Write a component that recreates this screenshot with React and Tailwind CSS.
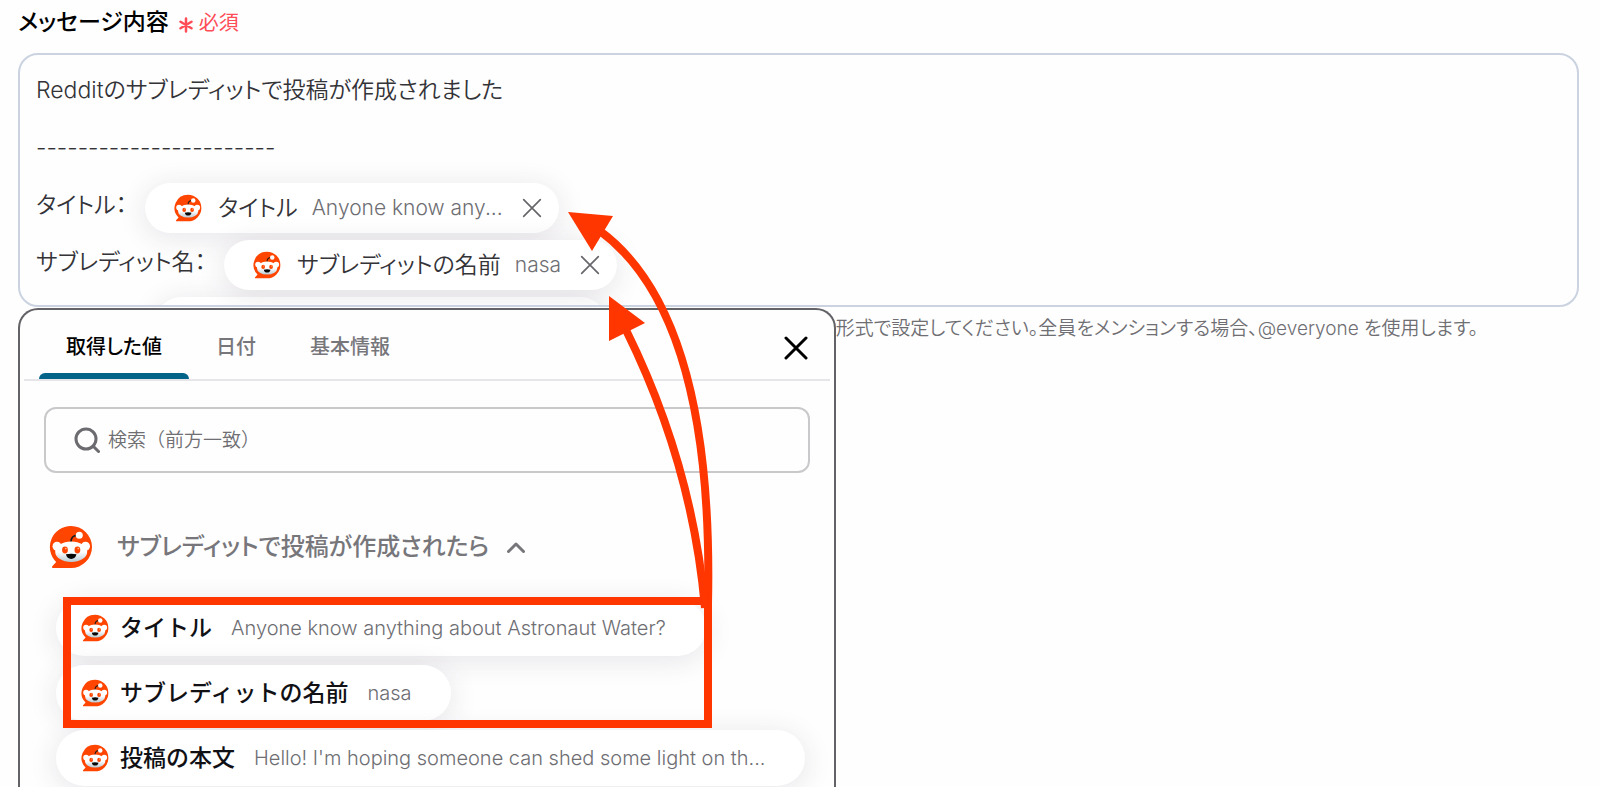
import { useState } from "react";

const tabs = ["取得した値", "日付", "基本情報"];

const messageLines = [
  { label: "タイトル：", name: "タイトル", value: "Anyone know any..." },
  { label: "サブレディット名：", name: "サブレディットの名前", value: "nasa" },
];

const outputs = [
  { name: "タイトル", value: "Anyone know anything about Astronaut Water?" },
  { name: "サブレディットの名前", value: "nasa" },
  { name: "投稿の本文", value: "Hello! I'm hoping someone can shed some light on th..." },
];

export default function App() {
  const [activeTab, setActiveTab] = useState(tabs[0]);
  const [query, setQuery] = useState("");

  return (
    <div className="relative h-screen overflow-hidden bg-[#fefefe] pl-[18px] pr-[21px] pt-[6px] font-[Inter,'Noto_Sans_CJK_JP',sans-serif] text-[#333338]">
      <div className="flex h-8 items-center gap-2.5">
        <span id="message-label" className="text-[23px] font-medium text-black [font-feature-settings:'palt']">
          メッセージ内容
        </span>
        <span className="flex items-center gap-1.5 pt-0.5 text-[20px] text-[#ff4d57]">
          <Asterisk />
          必須
        </span>
      </div>

      {/* Message editor */}
      <div
        role="textbox"
        aria-labelledby="message-label"
        aria-multiline="true"
        className="mt-[15px] h-[254px] overflow-hidden rounded-[20px] border-2 border-[#cbd3e1] px-4 py-[6px] text-[23px] font-[350] [font-feature-settings:'palt']"
      >
        <p className="leading-[58px]">Redditのサブレディットで投稿が作成されました</p>
        <p className="leading-[58px]">-----------------------</p>
        {messageLines.map((line) => (
          <div key={line.name} className="flex h-[57px] items-center gap-[18px]">
            <span>{line.label}</span>
            <MessageChip name={line.name} value={line.value} />
          </div>
        ))}
        <div className="ml-[120px] mt-[6px] h-[50px] w-[450px] rounded-full bg-white shadow-[0_4px_28px_rgba(60,50,80,0.13)]" />
      </div>

      <p className="mt-2 pr-[101px] text-right text-[19px] font-[350] leading-[28px] text-[#6e6e73] [font-feature-settings:'palt']">
        形式で設定してください。全員をメンションする場合、@everyone を使用します。
      </p>

      {/* Value picker */}
      <div className="absolute left-[18px] top-[308px] w-[818px] rounded-t-[20px] border-2 border-b-0 border-[#626267] bg-[#fefefe] pb-8">
        <div className="mx-1 flex items-stretch border-b-2 border-[#e6e6ea] pl-[15px] pr-[22px]">
          <div role="tablist" className="flex">
            {tabs.map((tab) => (
              <button
                key={tab}
                type="button"
                role="tab"
                aria-selected={tab === activeTab}
                onClick={() => setActiveTab(tab)}
                className={`relative h-[69px] px-[27px] pt-[4px] text-[20px] font-medium [font-feature-settings:'palt'] ${
                  tab === activeTab ? "text-black" : "text-[#77777b]"
                }`}
              >
                {tab}
                {tab === activeTab && (
                  <span className="absolute inset-x-0 bottom-0 h-[6px] rounded-t-[6px] bg-[#036388]" />
                )}
              </button>
            ))}
          </div>
          <button type="button" aria-label="閉じる" className="ml-auto pt-[7px] text-black">
            <Cross className="size-6" width={3} />
          </button>
        </div>

        <label className="mx-[24px] mt-[26px] flex h-[66px] items-center gap-2 rounded-xl border-2 border-[#c9c9cc] px-7">
          <SearchIcon />
          <input
            type="search"
            aria-label="検索（前方一致）"
            placeholder="検索（前方一致）"
            value={query}
            onChange={(e) => setQuery(e.target.value)}
            className="min-w-0 flex-1 bg-transparent pt-0.5 text-[19px] font-[350] outline-none placeholder:text-[#6e6e73]"
          />
        </label>

        <button type="button" aria-expanded="true" className="ml-[29px] mt-[50px] flex h-[48px] items-center text-[#77777b]">
          <RedditLogo className="size-[44px]" />
          <span className="ml-6 text-[24px] font-medium [font-feature-settings:'palt']">
            サブレディットで投稿が作成されたら
          </span>
          <svg viewBox="0 0 18 12" className="ml-[18px] h-3 w-[18px]" fill="none" stroke="currentColor" strokeWidth="3">
            <path d="M1.5 10.5 9 3l7.5 7.5" strokeLinecap="round" strokeLinejoin="round" />
          </svg>
        </button>

        <ul className="ml-[36px] mt-[29px] flex flex-col items-start gap-[9px]">
          {outputs.map((item) => (
            <li key={item.name}>
              <button
                type="button"
                className="flex h-[56px] items-center rounded-full bg-white pl-[25px] pr-[40px] shadow-[0_4px_28px_rgba(60,50,80,0.13)]"
              >
                <RedditLogo className="size-[28px]" />
                <span className="ml-[11px] text-[23px] font-medium text-[#111115]">{item.name}</span>
                <span className="ml-[19px] whitespace-nowrap text-[20px] font-[350] text-[#6e6e73]">{item.value}</span>
              </button>
            </li>
          ))}
        </ul>
      </div>

      <Annotations />
    </div>
  );
}

function MessageChip({ name, value }) {
  return (
    <span className="mt-[5px] flex h-[50px] items-center rounded-full bg-white pl-[29px] pr-[17px] shadow-[0_4px_28px_rgba(60,50,80,0.13)]">
      <RedditLogo className="size-[28px]" />
      <span className="ml-4">{name}</span>
      <span className="ml-[14px] text-[21px] text-[#6e6e73]">{value}</span>
      <button type="button" aria-label={`${name}を削除`} className="ml-[19px] text-[#66666b]">
        <Cross className="size-5" width={2} />
      </button>
    </span>
  );
}

function RedditLogo({ className }) {
  return (
    <svg viewBox="0 0 44 44" className={className} aria-hidden="true">
      <defs>
        <linearGradient id="snoo-face" x1="0" y1="0" x2="0" y2="1">
          <stop offset="0.5" stopColor="#ffffff" />
          <stop offset="1" stopColor="#b9c9d3" />
        </linearGradient>
      </defs>
      <path d="M22 1a21 21 0 0 1 0 42H4c-.9 0-1.300-1-.7-1.700L7.200 37A21 21 0 0 1 22 1Z" fill="#ff4500" />
      <path d="M22 17c0-4.500 2.400-6.800 6.500-6.800" fill="none" stroke="#1a1a1a" strokeWidth="1.600" />
      <circle cx="30.300" cy="10.300" r="3.500" fill="#fff" />
      <circle cx="8" cy="21.300" r="4.500" fill="#fff" />
      <circle cx="36.500" cy="21.300" r="4.500" fill="#fff" />
      <ellipse cx="22.200" cy="26.800" rx="16" ry="10.300" fill="url(#snoo-face)" />
      <ellipse cx="16" cy="25" rx="2.900" ry="3.400" fill="#ff4500" />
      <ellipse cx="28.400" cy="25" rx="2.900" ry="3.400" fill="#ff4500" />
      <circle cx="16.800" cy="23.600" r="0.800" fill="#ffc49c" />
      <circle cx="29.200" cy="23.600" r="0.800" fill="#ffc49c" />
      <path d="M16.900 29.300q5.300-1 10.600 0c-.6 3-2.700 4.600-5.300 4.600s-4.700-1.600-5.300-4.600Z" fill="#080808" />
    </svg>
  );
}

function Cross({ className, width }) {
  return (
    <svg viewBox="0 0 24 24" className={className} fill="none" stroke="currentColor" strokeWidth={width} strokeLinecap="round">
      <path d="M2 2l20 20M22 2 2 22" />
    </svg>
  );
}

function SearchIcon() {
  return (
    <svg viewBox="0 0 26 26" className="size-[26px] text-[#6b6b70]" fill="none" stroke="currentColor" strokeWidth="3">
      <circle cx="12" cy="12" r="10" />
      <path d="m19 19 5.500 5.500" strokeLinecap="round" />
    </svg>
  );
}

function Asterisk() {
  return (
    <svg viewBox="0 0 14 16" className="mt-1 h-4 w-3.5" fill="none" stroke="currentColor" strokeWidth="2.500" strokeLinecap="round">
      <path d="M7 1.500v13M1.500 4.700l11 6.600M12.500 4.700l-11 6.600" />
    </svg>
  );
}

// Arrows from the picked outputs to the chips they become
function Annotations() {
  return (
    <svg
      viewBox="0 0 720 740"
      className="pointer-events-none absolute left-0 top-0 h-[740px] w-[720px]"
      fill="none"
      stroke="#ff3600"
      strokeWidth="8"
      aria-hidden="true"
    >
      <rect x="67" y="601" width="641" height="123" />
      <path d="M600 231C680 290 712 420 708 604" />
      <path d="M626 330C668 415 696 505 705 608" />
      <path d="M568 212 613 216 592 251Z" fill="#ff3600" stroke="none" />
      <path d="M609 296 645 323 609 341Z" fill="#ff3600" stroke="none" />
    </svg>
  );
}
